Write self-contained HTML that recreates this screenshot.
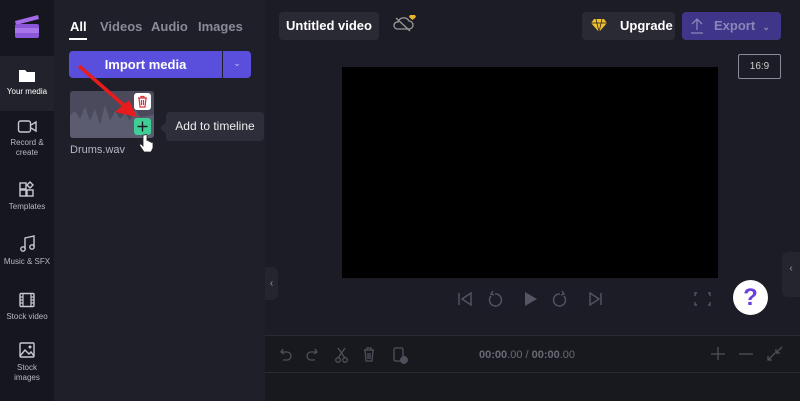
<!DOCTYPE html>
<html><head><meta charset="utf-8"><style>
*{margin:0;padding:0;box-sizing:border-box}
body{width:800px;height:401px;overflow:hidden;background:#1c1c26;font-family:"Liberation Sans",sans-serif;position:relative;color:#fff}
.abs{position:absolute}
.side{left:0;top:0;width:54px;height:401px;background:#16161e}
.panel{left:54px;top:0;width:211px;height:401px;background:#1f1f29}
.nav{position:absolute;left:0;width:54px;text-align:center;font-size:8px;color:#b8b8c4;line-height:10px}
.nav svg{display:block;margin:0 auto 4px}
.tab{font-size:13px;font-weight:bold;color:#8a8a98;top:19px}
</style></head><body>
<div class="abs side"></div>
<div class="abs" style="left:0;top:56px;width:54px;height:55px;background:#22222c"></div>
<!-- logo -->
<svg class="abs" style="left:13px;top:12px" width="28" height="28" viewBox="0 0 28 28"><path d="M2 9 L25 3 L26 7 L3 13Z" fill="#a46ae8"/><rect x="2" y="12" width="24" height="14" rx="2" fill="#8b57d9"/><rect x="2" y="16" width="24" height="5" fill="#a874ea"/></svg>
<div class="nav" style="top:68px;color:#fff"><svg width="18" height="15"><path d="M1 2h6l2 2h8v10H1z" fill="#fff"/></svg>Your media</div>
<div class="nav" style="top:119px"><svg width="20" height="15"><rect x="1.5" y="2" width="12" height="11" rx="2" fill="none" stroke="#c8c8d2" stroke-width="1.4"/><path d="M14 6l5-3v9l-5-3" fill="none" stroke="#c8c8d2" stroke-width="1.4"/></svg>Record &amp;<br>create</div>
<div class="nav" style="top:180px"><svg width="18" height="18"><rect x="2" y="3" width="6" height="6" fill="none" stroke="#c8c8d2" stroke-width="1.4"/><rect x="2" y="10" width="6" height="6" fill="none" stroke="#c8c8d2" stroke-width="1.4"/><rect x="9" y="10" width="6" height="6" fill="none" stroke="#c8c8d2" stroke-width="1.4"/><path d="M12 2l3 3-3 3-3-3z" fill="none" stroke="#c8c8d2" stroke-width="1.4"/></svg>Templates</div>
<div class="nav" style="top:235px"><svg width="18" height="18"><path d="M7 14V3l9-2v11" fill="none" stroke="#c8c8d2" stroke-width="1.4"/><circle cx="5" cy="14" r="2.2" fill="none" stroke="#c8c8d2" stroke-width="1.4"/><circle cx="14" cy="12" r="2.2" fill="none" stroke="#c8c8d2" stroke-width="1.4"/></svg>Music &amp; SFX</div>
<div class="nav" style="top:292px"><svg width="18" height="16"><rect x="2" y="1.5" width="14" height="13" rx="1" fill="none" stroke="#c8c8d2" stroke-width="1.4"/><path d="M5 2v12M13 2v12M2 5h3M2 8h3M2 11h3M13 5h3M13 8h3M13 11h3" stroke="#c8c8d2" stroke-width="1.2"/></svg>Stock video</div>
<div class="nav" style="top:341px"><svg width="18" height="18"><rect x="2" y="2" width="14" height="14" rx="1" fill="none" stroke="#c8c8d2" stroke-width="1.4"/><path d="M2 15l5-6 4 4 2-2 3 4" fill="none" stroke="#c8c8d2" stroke-width="1.4"/><circle cx="12" cy="6" r="1.5" fill="#c8c8d2"/></svg>Stock<br>images</div>

<div class="abs panel"></div>
<div class="abs tab" style="left:70px;color:#fff">All</div>
<div class="abs" style="left:69px;top:38px;width:18px;height:2px;background:#fff"></div>
<div class="abs tab" style="left:100px">Videos</div>
<div class="abs tab" style="left:151px">Audio</div>
<div class="abs tab" style="left:198px">Images</div>
<div class="abs" style="left:69px;top:51px;width:153px;height:27px;background:#5a4fdc;border-radius:4px 0 0 4px;font-size:13px;font-weight:bold;text-align:center;line-height:27px">Import media</div>
<div class="abs" style="left:223px;top:51px;width:28px;height:27px;background:#5a4fdc;border-radius:0 4px 4px 0;text-align:center;line-height:25px;font-size:9px;color:#c8c4f5">&#8964;</div>
<div class="abs" style="left:70px;top:91px;width:84px;height:47px;background:#4a4a5c;border-radius:3px;overflow:hidden"><svg width="84" height="47"><path d="M0 24 L5 20 L10 28 L15 16 L20 30 L25 18 L30 34 L35 14 L40 30 L45 20 L50 28 L55 22 L60 30 L65 18 L70 26 L84 24 L84 47 L0 47Z" fill="#5c5c70"/></svg></div>
<div class="abs" style="left:134px;top:93px;width:17px;height:17px;background:#fff;border-radius:3px"><svg width="17" height="17"><path d="M4 5h9M7 5V3.5h3V5M5 5l1 9h5l1-9M7.5 7v5M9.5 7v5" fill="none" stroke="#d9303a" stroke-width="1.2"/></svg></div>
<div class="abs" style="left:134px;top:118px;width:17px;height:17px;background:#3fcf96;border-radius:3px"><svg width="17" height="17"><path d="M8.5 3.5v10M3.5 8.5h10" stroke="#1a1a22" stroke-width="1.4"/></svg></div>
<svg class="abs" style="left:75px;top:62px" width="70" height="65"><path d="M4 4 L52 46" stroke="#e81c1c" stroke-width="3.5"/><path d="M62 55 L40 50 L54 38Z" fill="#e81c1c"/></svg>
<svg class="abs" style="left:139px;top:133px" width="16" height="22"><path d="M4 2v11l-2-2c-1 0-2 1-1 2l4 6h7l2-4v-5c0-1-2-1-2 0v-1c0-1-2-1-2 0v-1c0-1-2-1-2 0V2c0-1-2-1-2 0z" fill="#fff" stroke="#222" stroke-width=".8"/></svg>
<div class="abs" style="left:70px;top:144px;font-size:11px;color:#b8b8c4">Drums.wav</div>
<div class="abs" style="left:160px;top:122px;width:0;height:0;border:6px solid transparent;border-right-color:#2e2e3a;border-left:0"></div>
<div class="abs" style="left:166px;top:112px;width:98px;height:29px;background:#2e2e3a;border-radius:4px;font-size:12px;line-height:29px;text-align:center;color:#eee">Add to timeline</div>

<!-- main -->
<div class="abs" style="left:265px;top:0;width:535px;height:335px;background:#1c1c26"></div>
<div class="abs" style="left:265px;top:267px;width:13px;height:33px;background:#25252f;border-radius:0 6px 6px 0;color:#999;font-size:10px;line-height:33px;text-align:center">&#8249;</div>
<div class="abs" style="left:782px;top:252px;width:18px;height:45px;background:#25252f;border-radius:6px 0 0 6px;color:#999;font-size:10px;line-height:33px;text-align:center">&#8249;</div>
<div class="abs" style="left:279px;top:12px;width:100px;height:28px;background:#2a2a35;border-radius:4px;font-size:13px;font-weight:bold;line-height:28px;text-align:center">Untitled video</div>
<svg class="abs" style="left:392px;top:12px" width="26" height="22"><path d="M5 17h12a4 4 0 0 0 0-8 6 6 0 0 0-11 1 3.5 3.5 0 0 0-1 7z" fill="none" stroke="#999" stroke-width="1.3"/><path d="M4 6l14 13" stroke="#999" stroke-width="1.3"/><path d="M18 3h5l1 2-3.5 3L17 5z" fill="#e9b52b"/></svg>
<div class="abs" style="left:582px;top:12px;width:93px;height:28px;background:#2a2a35;border-radius:4px;font-size:13px;font-weight:bold;line-height:28px;padding-left:38px">Upgrade</div>
<svg class="abs" style="left:591px;top:18px" width="16" height="15"><path d="M3 1h10l3 4-8 9-8-9z" fill="#f0bd2d"/><path d="M0 5h16M5 1l3 13 3-13" stroke="#1c1c26" stroke-width=".7" fill="none"/></svg>
<div class="abs" style="left:682px;top:12px;width:99px;height:28px;background:#3f3689;border-radius:4px;font-size:13px;font-weight:bold;line-height:28px;color:#8b86b8;padding-left:32px">Export &nbsp;<span style="font-size:9px">&#8964;</span></div>
<svg class="abs" style="left:690px;top:17px" width="14" height="17"><path d="M7 13V2M2 7l5-5 5 5M1 16h12" stroke="#8b86b8" stroke-width="1.3" fill="none"/></svg>
<div class="abs" style="left:738px;top:54px;width:43px;height:25px;border:1px solid #8a8a96;border-radius:2px;font-size:10px;color:#ccc;text-align:center;line-height:23px">16:9</div>
<div class="abs" style="left:342px;top:67px;width:376px;height:211px;background:#000"></div>
<!-- controls -->
<svg class="abs" style="left:455px;top:288px" width="260" height="22" fill="none" stroke="#555563" stroke-width="1.4"><path d="M4 5v12M16 5l-9 6 9 6z"/><path d="M40 6a6 6 0 1 1-4 2M38 3l-2 3 3 1"/><path d="M70 4v14l12-7z" fill="#555563" stroke="none"/><path d="M105 6a6 6 0 1 0 4 2M107 3l2 3-3 1"/><path d="M135 5l9 6-9 6zM146 5v12"/><path d="M242 5h-2v3M253 5h2v3M242 17h-2v-3M253 17h2v-3"/></svg>
<div class="abs" style="left:733px;top:280px;width:35px;height:35px;background:#fff;border-radius:50%;text-align:center;font-size:24px;font-weight:bold;line-height:35px;color:#6a3fe0">?</div>
<!-- timeline -->
<div class="abs" style="left:265px;top:335px;width:535px;height:66px;background:#18181f"></div>
<div class="abs" style="left:265px;top:335px;width:535px;height:1px;background:#2a2a34"></div>
<div class="abs" style="left:265px;top:372px;width:535px;height:1px;background:#2a2a34"></div>
<svg class="abs" style="left:278px;top:345px" width="140" height="20" fill="none" stroke="#50505c" stroke-width="1.3"><path d="M5 4l-2 3 3 2M3 7h6a4 4 0 0 1 0 8H5"/><path d="M37 4l2 3-3 2M39 7h-6a4 4 0 0 0 0 8h4"/><circle cx="60" cy="15" r="2.3"/><circle cx="67" cy="15" r="2.3"/><path d="M60 13L67 3M67 13L60 3"/><path d="M86 5h10M89 5V3h4v2M87 5l1 11h6l1-11M90 8v6M92 8v6"/><rect x="116" y="3" width="9" height="13" rx="1.5"/><circle cx="126" cy="15" r="3.3" fill="#50505c"/></svg>
<div class="abs" style="left:479px;top:349px;font-size:11px;color:#6a6a76"><b>00:00</b>.00 / <b>00:00</b>.00</div>
<svg class="abs" style="left:706px;top:344px" width="80" height="20" fill="none" stroke="#50505c" stroke-width="1.3"><path d="M12 3v13M5 10h14"/><path d="M33 10h14"/><path d="M62 16l7-7M62 12v4h4M76 3l-6 6M70 5v4h4"/></svg>
</body></html>
